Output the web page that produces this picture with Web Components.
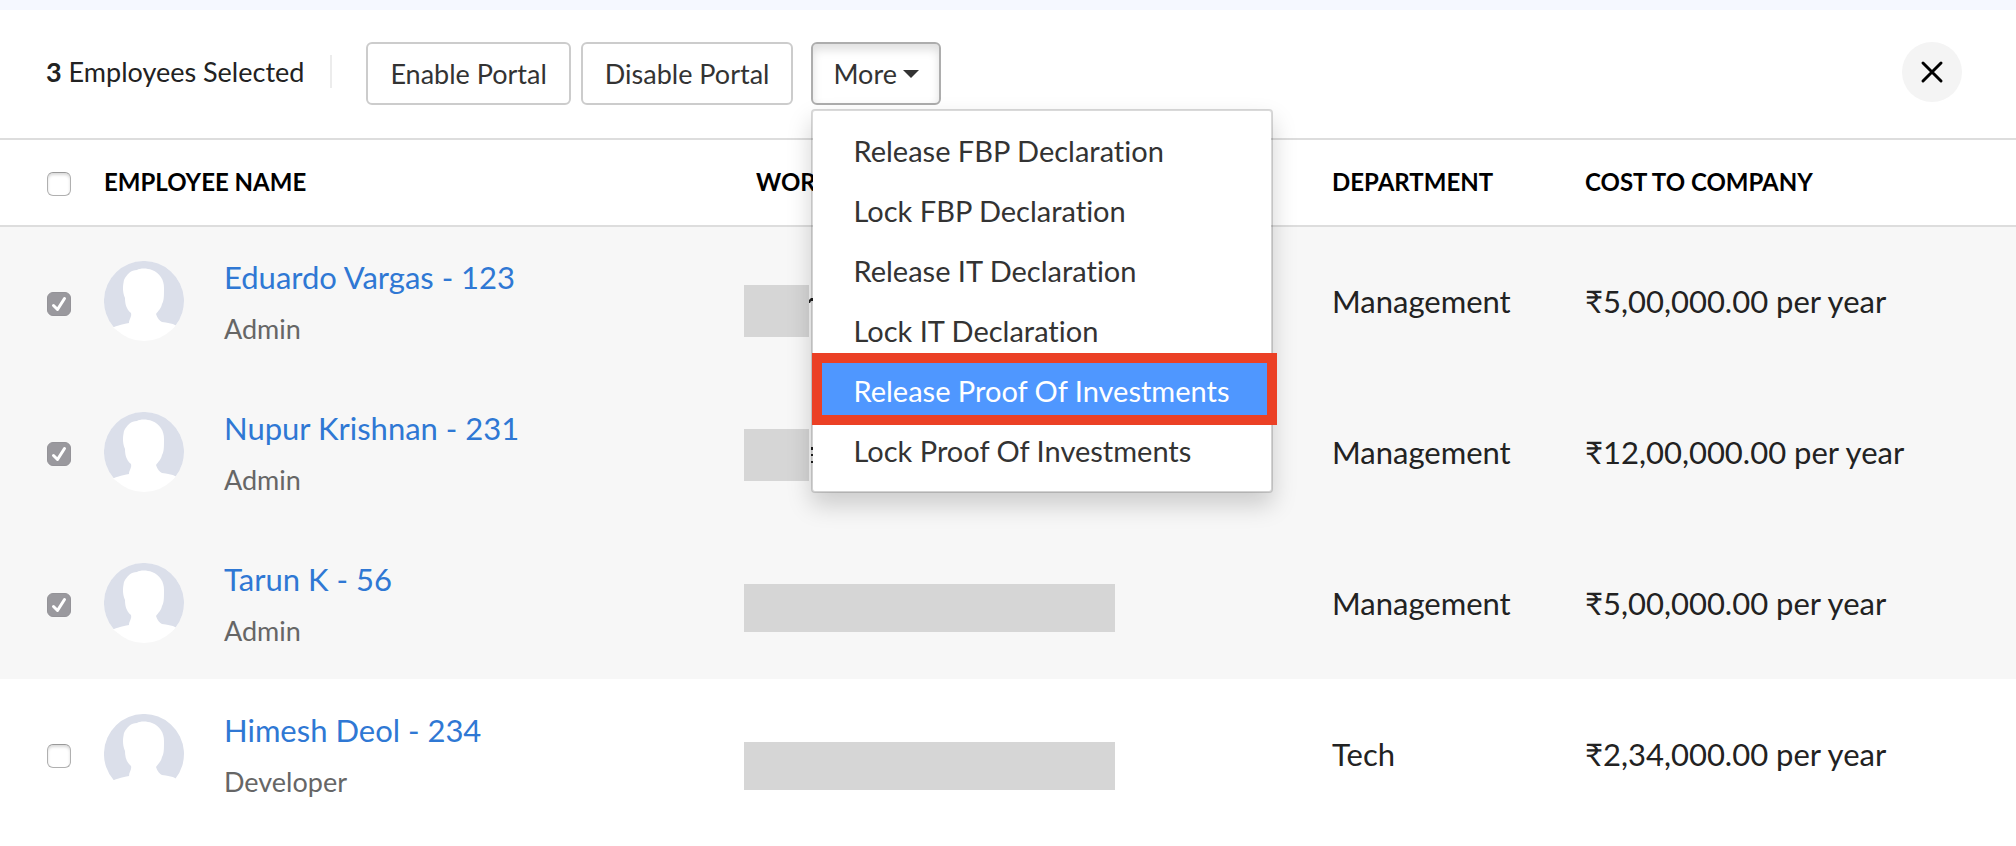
<!DOCTYPE html>
<html lang="en">
<head>
<meta charset="utf-8">
<meta name="viewport" content="width=device-width, initial-scale=1">
<title>Employees</title>
<style>
  body {
    margin: 0;
    background: #fff;
    color: #222;
    font-family: Lato, "Liberation Sans", sans-serif;
    font-variant-ligatures: none;
  }
</style>
</head>
<body>
<employees-page></employees-page>

<template id="employees-page">
  <style>
    :host { display: block; border-top: 10px solid #f5f8ff; }
  </style>
  <bulk-toolbar>
    <span slot="summary"><b>3</b> Employees Selected</span>
    <tool-button>Enable Portal</tool-button>
    <tool-button>Disable Portal</tool-button>
    <more-menu slot="menu"></more-menu>
  </bulk-toolbar>
  <employee-table></employee-table>
</template>

<template id="bulk-toolbar">
  <style>
    :host {
      display: flex;
      align-items: flex-start;
      padding: 32px 54px 33px 46px;
      border-bottom: 2px solid #ddd;
      font-size: 27px;
    }
    .summary { display: flex; align-items: center; gap: 26px; height: 58px; white-space: nowrap; }
    .summary::after { content: ""; width: 2px; height: 33px; background: #ececec; }
    .actions { display: flex; gap: 10px; margin-left: 34px; }
    .menu { margin-left: 18px; }
    .close {
      display: grid;
      place-items: center;
      width: 60px;
      height: 60px;
      margin-left: auto;
      padding: 0;
      border: 0;
      border-radius: 50%;
      background: #f4f4f4;
      color: #000;
    }
  </style>
  <div class="summary"><slot name="summary"></slot></div>
  <div class="actions"><slot></slot></div>
  <div class="menu"><slot name="menu"></slot></div>
  <button class="close" type="button" aria-label="Close">
    <svg width="24" height="24" viewBox="0 0 24 24" fill="none" stroke="currentColor" stroke-width="3" stroke-linecap="round" aria-hidden="true"><path d="M3 3l18 18M21 3L3 21"/></svg>
  </button>
</template>

<template id="tool-button">
  <style>
    :host { display: block; }
    button {
      display: flex;
      align-items: center;
      gap: 6px;
      height: 63px;
      padding: 0 22px;
      border: 2px solid #ccc;
      border-radius: 6px;
      background: #fff;
      color: #333;
      font: inherit;
      white-space: nowrap;
    }
    :host([pressed]) button {
      padding: 0 20px;
      border-color: #adadad;
      box-shadow: inset 0 6px 10px rgba(0, 0, 0, .125);
    }
  </style>
  <button type="button"><slot></slot></button>
</template>

<template id="more-menu">
  <style>
    :host { display: block; position: relative; }
    .list {
      position: absolute;
      z-index: 1;
      top: 67px;
      left: 0;
      box-sizing: border-box;
      width: 462px;
      padding: 10px 0;
      border: 2px solid rgba(0, 0, 0, .15);
      border-radius: 4px;
      background: #fff;
      background-clip: padding-box;
      box-shadow: 0 12px 24px rgba(0, 0, 0, .175);
    }
  </style>
  <tool-button pressed>More
    <svg width="16" height="8" viewBox="0 0 16 8" fill="currentColor" aria-hidden="true"><path d="M0 0h16L8 8z"/></svg>
  </tool-button>
  <div class="list" role="menu">
    <menu-item>Release FBP Declaration</menu-item>
    <menu-item>Lock FBP Declaration</menu-item>
    <menu-item>Release IT Declaration</menu-item>
    <menu-item>Lock IT Declaration</menu-item>
    <menu-item active>Release Proof Of Investments</menu-item>
    <menu-item>Lock Proof Of Investments</menu-item>
  </div>
</template>

<template id="menu-item">
  <style>
    :host { display: block; position: relative; }
    button {
      display: block;
      width: 100%;
      height: 60px;
      padding: 0 40px 2px;
      border: 0;
      background: none;
      color: #333;
      font: inherit;
      font-size: 29px;
      text-align: left;
      white-space: nowrap;
    }
    :host([active]) button { background: #4f97ff; color: #fff; }
    :host([active])::after {
      content: "";
      position: absolute;
      inset: -8px -6px -4px -1px;
      border: 10px solid #eb4025;
      pointer-events: none;
    }
  </style>
  <button type="button" role="menuitem"><slot></slot></button>
</template>

<template id="tick-box">
  <style>
    :host { display: grid; width: 24px; height: 24px; }
    input, svg { grid-area: 1 / 1; }
    input {
      appearance: none;
      box-sizing: border-box;
      width: 24px;
      height: 24px;
      margin: 0;
      border: 1px solid #b0b0b0;
      border-top-color: #999;
      border-radius: 6px;
      background: #fff;
      box-shadow: inset 0 2px 3px rgba(0, 0, 0, .15);
    }
    input:checked { border-color: #949398; background: #9a999e; box-shadow: none; }
    svg { display: none; pointer-events: none; }
    input:checked + svg { display: block; }
  </style>
  <input type="checkbox">
  <svg width="24" height="24" viewBox="0 0 24 24" fill="none" stroke="#fff" stroke-width="3" stroke-linecap="round" stroke-linejoin="round" aria-hidden="true"><path d="M6.500 13.500l4 4L17.500 6.500"/></svg>
</template>

<template id="user-avatar">
  <style>
    :host { display: block; width: 80px; height: 80px; }
    svg { display: block; }
  </style>
  <svg width="80" height="80" viewBox="0 0 80 80" fill="#fff" aria-hidden="true">
    <circle cx="40" cy="40" r="40"/>
    <path fill="#dbdfea" d="M9.600 66A40 40 0 1 1 71.200 65L40 62Z"/>
    <path d="M27 52C22 48 21 42 21 37C18 30 19 24 20 19C23 13 27 9 33 9C36 7 43 7 48 9C56 12 60 19 60 27C60 35 60 40 58 43C57 48 54 50 52 53C53 57 56 60 58 61C63 62 68 62 72 64.500L66 70H14L9 66.500C14 64 20 63 25 62C25 58 28 56 27 52Z"/>
  </svg>
</template>

<template id="employee-table">
  <style>
    :host { display: block; }
    table { width: 100%; table-layout: fixed; border-collapse: collapse; }
    col.pick { width: 104px; }
    col.email { width: 588px; }
    col.dept { width: 253px; }
    col.cost { width: 431px; }
    th, td { box-sizing: border-box; padding: 0 0 2px; text-align: left; }
    th { height: 86px; border-bottom: 2px solid #ddd; color: #000; font-size: 24px; white-space: nowrap; }
    th:nth-child(3) { padding-left: 12px; }
    tick-box { margin: 5px 0 0 47px; }
    td { height: 151px; font-size: 31px; }
    tr.selected { background: #f7f7f7; }
    .person { display: flex; align-items: center; gap: 40px; }
    .person div { padding-top: 4px; line-height: 52px; }
    a { color: #2f78d4; text-decoration: none; }
    .role { display: block; color: #666; font-size: 27px; }
    td.mail { padding: 0; vertical-align: bottom; }
  </style>
  <table>
    <colgroup><col class="pick"><col><col class="email"><col class="dept"><col class="cost"></colgroup>
    <thead>
      <tr>
        <th><tick-box label="Select all employees"></tick-box></th>
        <th>EMPLOYEE NAME</th>
        <th>WORK EMAIL</th>
        <th>DEPARTMENT</th>
        <th>COST TO COMPANY</th>
      </tr>
    </thead>
    <tbody></tbody>
  </table>
</template>

<template id="hidden-mail">
  <style>
    :host { display: flex; align-items: center; padding-bottom: 47px; }
    :host([low]) { padding-bottom: 40px; }
    .mask { width: 371px; height: 48px; background: #d6d6d6; }
    svg { display: none; }
    :host([short]) .mask { width: 65px; height: 52px; }
    :host([short]) svg { display: block; }
    :host([low]) .dots, :host(:not([low])) .hook { display: none; }
  </style>
  <div class="mask"></div>
  <svg width="4" height="26" viewBox="0 0 4 26" fill="#222" aria-hidden="true">
    <path class="hook" d="M0 5V2L2 0H4V3L2 3L1 5Z"/>
    <path class="dots" d="M2 5h2v3H2zM2 12h2v2H2zM2 19h2v2H2z"/>
  </svg>
</template>

<script>
  class TemplateElement extends HTMLElement {
    constructor() {
      super();
      const template = document.getElementById(this.localName);
      this.attachShadow({ mode: "open" }).append(template.content.cloneNode(true));
    }
  }

  class TickBox extends TemplateElement {
    connectedCallback() {
      const input = this.shadowRoot.querySelector("input");
      input.checked = this.hasAttribute("checked");
      input.setAttribute("aria-label", this.getAttribute("label") || "Select");
    }
  }

  const employees = [
    { name: "Eduardo Vargas - 123", role: "Admin", dept: "Management", cost: "₹5,00,000.00 per year", selected: true, mail: "short low" },
    { name: "Nupur Krishnan - 231", role: "Admin", dept: "Management", cost: "₹12,00,000.00 per year", selected: true, mail: "short" },
    { name: "Tarun K - 56", role: "Admin", dept: "Management", cost: "₹5,00,000.00 per year", selected: true, mail: "" },
    { name: "Himesh Deol - 234", role: "Developer", dept: "Tech", cost: "₹2,34,000.00 per year", selected: false, mail: "low" }
  ];

  class EmployeeTable extends TemplateElement {
    connectedCallback() {
      this.shadowRoot.querySelector("tbody").innerHTML = employees.map(e => `
        <tr class="${e.selected ? "selected" : ""}">
          <td><tick-box label="Select ${e.name}" ${e.selected ? "checked" : ""}></tick-box></td>
          <td><div class="person"><user-avatar></user-avatar><div><a href="#">${e.name}</a><span class="role">${e.role}</span></div></div></td>
          <td class="mail"><hidden-mail ${e.mail}></hidden-mail></td>
          <td>${e.dept}</td>
          <td>${e.cost}</td>
        </tr>`).join("");
    }
  }

  customElements.define("tick-box", TickBox);
  customElements.define("employee-table", EmployeeTable);
  for (const name of ["user-avatar", "hidden-mail", "menu-item", "tool-button", "more-menu", "bulk-toolbar", "employees-page"]) {
    customElements.define(name, class extends TemplateElement {});
  }
</script>
</body>
</html>
